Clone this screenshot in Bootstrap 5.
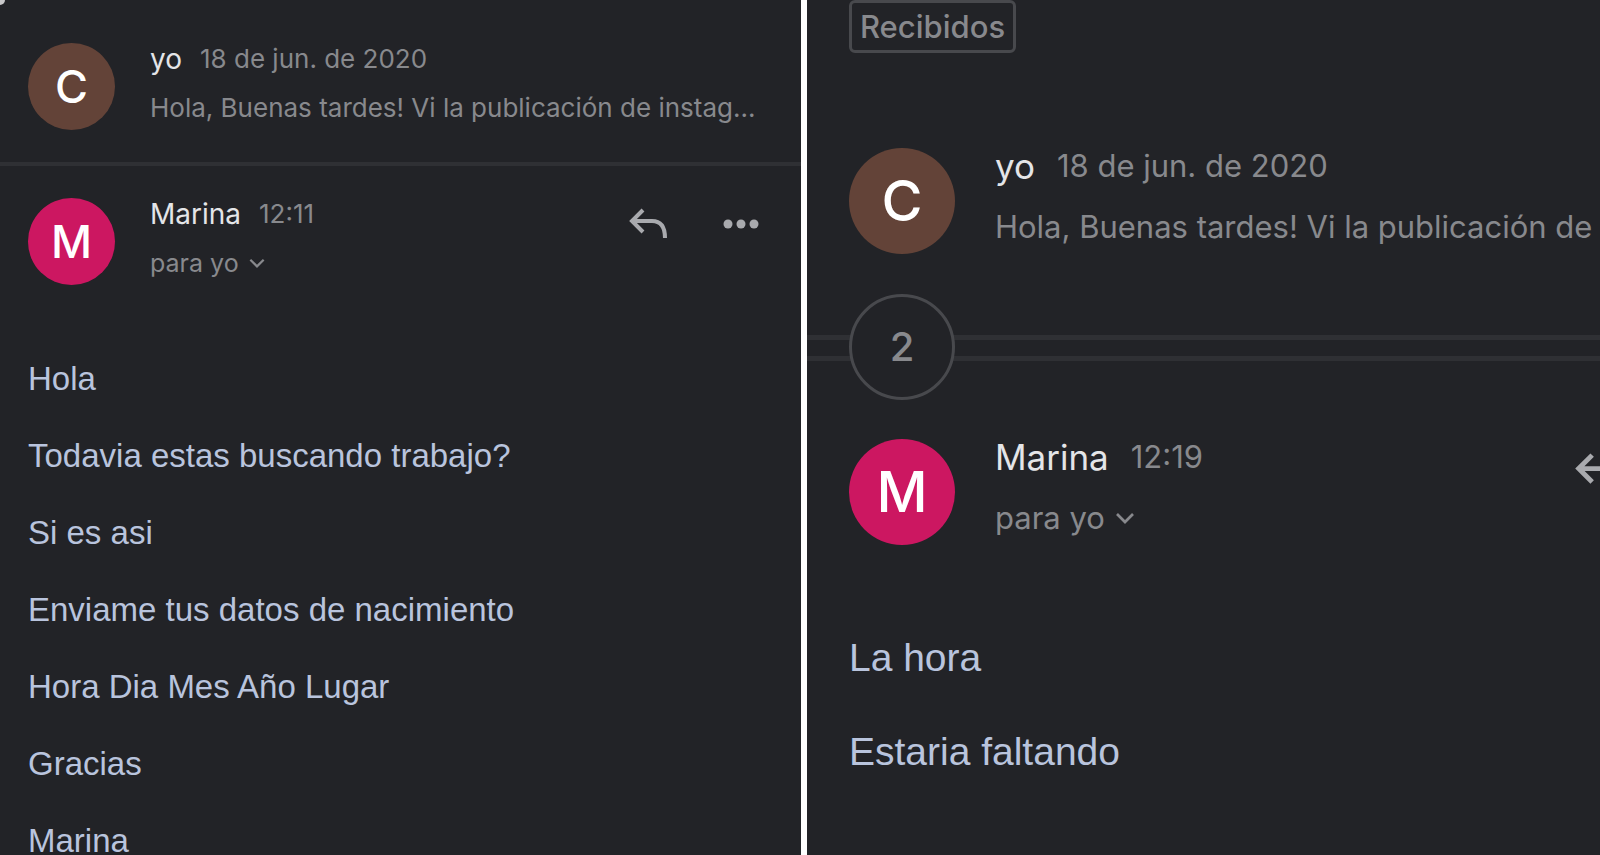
<!DOCTYPE html>
<html lang="es">
<head>
<meta charset="utf-8">
<meta name="viewport" content="width=device-width, initial-scale=1">
<title>Marina</title>
<link href="https://cdn.jsdelivr.net/npm/bootstrap@5.3.0/dist/css/bootstrap.min.css" rel="stylesheet">
<style>
  body { background: #222327; font-family: Inter, "Liberation Sans", sans-serif; }
  .panes { display: grid; grid-template-columns: minmax(0, 101fr) 6px minmax(0, 100fr); }
  .pane {
    --avatar: 87px; --gap: 35px; --line: 32px; --between: 17px;
    --meta: 26px; --to: 25px; --name: 28px; --initial: 45px; --body: 33px; --pitch: 77px; --icon: 40px;
    color: #88898d; font-size: var(--meta);
  }
  .pane-large {
    --avatar: 106px; --gap: 40px; --line: 36px; --between: 25px;
    --meta: 31px; --to: 31px; --name: 35px; --initial: 56px; --body: 39px; --pitch: 94px; --icon: 49px;
  }
  .inner { padding: 43px 28px 0; }
  .pane-large .inner { width: 123%; padding: 0 42px; }
  .message { gap: var(--gap); line-height: var(--line); }
  .avatar { width: var(--avatar); height: var(--avatar); font-size: var(--initial); font-weight: 500; color: #fff; }
  .avatar-c { background: #634338; }
  .avatar-m { background: #cc1761; }
  .meta-lines { gap: var(--between); }
  .sender { color: #e4e5e8; font-size: var(--name); font-weight: 400; line-height: var(--line); }
  .date { margin-left: 18px; }
  .pane-large .date { margin-left: 22px; }
  .icon-btn { color: #a9aaae; line-height: 0; }
  .icon-btn svg { width: var(--icon); height: var(--icon); }
  .to-btn { font-size: var(--to); line-height: var(--line); color: inherit; }
  .to-btn:hover { color: inherit; }
  .actions { gap: 52px; margin-top: 7px; padding-right: 12px; }
  .pane-large .actions { padding-right: 15px; margin-top: 10px; }
  .rule { height: 4px; background: #2f3034; margin: 32px -28px 32px; }
  .mail-body { font-family: "Liberation Sans", Arial, sans-serif; font-size: var(--body); line-height: var(--pitch); color: #b9c4dd; margin-top: 55px; }
  .pane-large .mail-body { margin-top: 66px; }
  .label-tag { height: 53px; border: 3px solid #48494d; border-radius: 6px; padding: 0 8px; line-height: 48px; font-weight: 500; font-size: 31px; color: #88898d; margin-bottom: 95px; }
  .stack-rule { margin: 40px -42px 39px; padding-left: 42px; background: linear-gradient(#2f3034 0 5px, transparent 5px 21px, #2f3034 21px 26px) 0 41px / 100% 26px no-repeat; }
  .count { width: 106px; height: 106px; border: 3px solid #48494d; background: #222327; color: #88898d; font-size: 40px; font-weight: 500; }
  .corner { width: 5px; height: 5px; background: #c8c8ca; border-bottom-right-radius: 5px; }
</style>
</head>
<body>
<main class="panes vh-100 overflow-hidden">
  <section class="pane overflow-hidden position-relative">
    <span class="corner position-absolute top-0 start-0"></span>
    <div class="inner">
      <article class="message d-flex align-items-start">
        <div class="avatar avatar-c rounded-circle d-flex flex-shrink-0 align-items-center justify-content-center">C</div>
        <div class="meta-lines d-flex flex-column text-nowrap">
          <div class="d-flex"><h2 class="sender m-0">yo</h2><span class="date">18 de jun. de 2020</span></div>
          <div>Hola, Buenas tardes! Vi la publicación de instag...</div>
        </div>
      </article>
      <div class="rule"></div>
      <article>
        <header class="message d-flex align-items-start">
          <div class="avatar avatar-m rounded-circle d-flex flex-shrink-0 align-items-center justify-content-center">M</div>
          <div class="meta-lines d-flex flex-column text-nowrap">
            <div class="d-flex"><h2 class="sender m-0">Marina</h2><span class="date">12:11</span></div>
            <button type="button" class="to-btn btn p-0 border-0 d-flex align-items-center gap-2">para yo
              <svg width="20" height="20" viewBox="0 0 18 18" fill="none" stroke="currentColor" stroke-width="2"><path d="M3 6l6 6 6-6"/></svg></button>
          </div>
          <div class="actions d-flex ms-auto">
            <button type="button" class="icon-btn btn p-0 border-0" aria-label="Responder"><svg viewBox="0 0 40 40" fill="none" stroke="currentColor" stroke-width="4"><path d="M14 5L3 16l11 11M3 16h20q13 0 13 17"/></svg></button>
            <button type="button" class="icon-btn btn p-0 border-0" aria-label="Más"><svg viewBox="0 0 40 40" fill="currentColor"><circle cx="7" cy="19" r="4.5"/><circle cx="20" cy="19" r="4.5"/><circle cx="33" cy="19" r="4.5"/></svg></button>
          </div>
        </header>
        <div class="mail-body">
          <p class="m-0">Hola</p>
          <p class="m-0">Todavia estas buscando trabajo?</p>
          <p class="m-0">Si es asi</p>
          <p class="m-0">Enviame tus datos de nacimiento</p>
          <p class="m-0">Hora Dia Mes Año Lugar</p>
          <p class="m-0">Gracias</p>
          <p class="m-0">Marina</p>
        </div>
      </article>
    </div>
  </section>
  <div class="bg-white"></div>
  <section class="pane pane-large overflow-hidden">
    <div class="inner">
      <div class="d-flex"><span class="label-tag">Recibidos</span></div>
      <article class="message d-flex align-items-start">
        <div class="avatar avatar-c rounded-circle d-flex flex-shrink-0 align-items-center justify-content-center">C</div>
        <div class="meta-lines d-flex flex-column text-nowrap">
          <div class="d-flex"><h2 class="sender m-0">yo</h2><span class="date">18 de jun. de 2020</span></div>
          <div>Hola, Buenas tardes! Vi la publicación de</div>
        </div>
      </article>
      <div class="stack-rule">
        <button type="button" class="count btn rounded-circle p-0 d-flex align-items-center justify-content-center">2</button>
      </div>
      <article>
        <header class="message d-flex align-items-start">
          <div class="avatar avatar-m rounded-circle d-flex flex-shrink-0 align-items-center justify-content-center">M</div>
          <div class="meta-lines d-flex flex-column text-nowrap">
            <div class="d-flex"><h2 class="sender m-0">Marina</h2><span class="date">12:19</span></div>
            <button type="button" class="to-btn btn p-0 border-0 d-flex align-items-center gap-2">para yo
              <svg width="24" height="24" viewBox="0 0 18 18" fill="none" stroke="currentColor" stroke-width="2"><path d="M3 6l6 6 6-6"/></svg></button>
          </div>
          <div class="actions d-flex ms-auto">
            <button type="button" class="icon-btn btn p-0 border-0" aria-label="Responder"><svg viewBox="0 0 40 40" fill="none" stroke="currentColor" stroke-width="4"><path d="M14 5L3 16l11 11M3 16h20q13 0 13 17"/></svg></button>
            <button type="button" class="icon-btn btn p-0 border-0" aria-label="Más"><svg viewBox="0 0 40 40" fill="currentColor"><circle cx="7" cy="19" r="4.5"/><circle cx="20" cy="19" r="4.5"/><circle cx="33" cy="19" r="4.5"/></svg></button>
          </div>
        </header>
        <div class="mail-body">
          <p class="m-0">La hora</p>
          <p class="m-0">Estaria faltando</p>
        </div>
      </article>
    </div>
  </section>
</main>
<script src="https://cdn.jsdelivr.net/npm/bootstrap@5.3.0/dist/js/bootstrap.bundle.min.js"></script>
</body>
</html>
